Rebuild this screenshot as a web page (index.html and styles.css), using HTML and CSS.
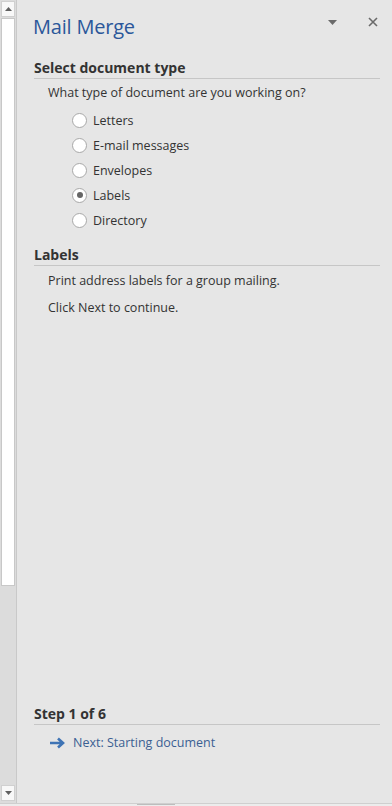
FILE: index.html
```html
<!DOCTYPE html>
<html>
<head>
<meta charset="utf-8">
<link rel="stylesheet" href="styles.css">
</head>
<body>
<div class="app">
  <div class="scrollbar">
    <div class="sb-btn"><svg width="7" height="4" viewBox="0 0 7 4"><path d="M0 4 L3.5 0 L7 4 Z" fill="#606060"/></svg></div>
    <div class="sb-thumb"></div>
    <div class="sb-track"></div>
    <div class="sb-btn"><svg width="7" height="4" viewBox="0 0 7 4"><path d="M0 0 L3.5 4 L7 0 Z" fill="#606060"/></svg></div>
  </div>
  <div class="panel">
    <div class="header">
      <h1 class="title">Mail Merge</h1>
      <div class="controls">
        <svg class="ctl-drop" width="9" height="5" viewBox="0 0 9 5"><path d="M0 0 H9 L4.5 5 Z" fill="#6a6a6a"/></svg>
        <svg class="ctl-close" width="10" height="10" viewBox="0 0 10 10"><path d="M1 1 L9 9 M9 1 L1 9" stroke="#6a6a6a" stroke-width="1.6"/></svg>
      </div>
    </div>
    <section class="section">
      <h2 class="heading">Select document type</h2>
      <p class="text q">What type of document are you working on?</p>
      <ul class="radios">
        <li class="radio"><span class="dot"></span>Letters</li>
        <li class="radio"><span class="dot"></span>E-mail messages</li>
        <li class="radio"><span class="dot"></span>Envelopes</li>
        <li class="radio"><span class="dot on"></span>Labels</li>
        <li class="radio"><span class="dot"></span>Directory</li>
      </ul>
    </section>
    <section class="section">
      <h2 class="heading">Labels</h2>
      <p class="text">Print address labels for a group mailing.</p>
      <p class="text t2">Click Next to continue.</p>
    </section>
    <div class="spacer"></div>
    <section class="section footer">
      <h2 class="heading">Step 1 of 6</h2>
      <a class="next"><svg width="17" height="12" viewBox="0 0 17 12"><path d="M1 6 H13 M9 1.5 L14 6 L9 10.5" stroke="#3f74b5" stroke-width="2.6" fill="none"/></svg>Next: Starting document</a>
    </section>
  </div>
</div>
<div class="bottom"><div class="bottom-thumb"></div></div>
</body>
</html>
```

FILE: styles.css
```css
html, body {
  margin: 0;
  padding: 0;
  width: 392px;
  height: 806px;
  overflow: hidden;
  background: #e6e6e6;
  font-family: "Open Sans", "Noto Sans", sans-serif;
}
.app {
  display: flex;
  height: 803px;
}
.scrollbar {
  width: 17px;
  border-right: 1px solid #c9c9c9;
  background: #dcdcdc;
  display: flex;
  flex-direction: column;
  padding: 1px 1px 2px 1px;
  box-sizing: border-box;
  gap: 1px;
}
.sb-btn {
  height: 14px;
  background: #f8f8f8;
  border: 1px solid #d0d0d0;
  display: flex;
  align-items: center;
  justify-content: center;
}
.sb-thumb {
  height: 566px;
  background: #ffffff;
  border: 1px solid #c8c8c8;
}
.sb-track {
  flex: 1;
}
.panel {
  flex: 1;
  display: flex;
  flex-direction: column;
  padding: 0 12px 0 17px;
}
.header {
  display: flex;
  align-items: flex-start;
  justify-content: space-between;
  height: 58px;
}
.title {
  margin: 0;
  margin-top: 13px;
  margin-left: -1px;
  font-weight: normal;
  font-size: 20px;
  line-height: 28px;
  color: #2b579a;
  letter-spacing: -0.2px;
}
.controls {
  display: flex;
  align-items: center;
  gap: 31px;
  margin-top: 17px;
  height: 10px;
  padding-right: 2px;
}
.ctl-drop { margin-top: 1px; }
.section {
  display: flex;
  flex-direction: column;
}
.heading {
  margin: 0;
  font-size: 14px;
  font-weight: bold;
  color: #333333;
  line-height: 19px;
  padding-bottom: 1px;
  border-bottom: 1px solid #c6c6c6;
}
.text {
  margin: 0;
  padding-left: 14px;
  font-size: 12.5px;
  color: #333333;
  line-height: 18px;
  margin-top: 6px;
}
.text.q { margin-top: 5px; }
.t2 { margin-top: 9px; }
.radios {
  list-style: none;
  margin: 9px 0 0 0;
  padding: 0 0 0 38px;
  display: flex;
  flex-direction: column;
  gap: 7px;
}
.radio {
  display: flex;
  align-items: center;
  gap: 6px;
  font-size: 12.5px;
  color: #333333;
  height: 18px;
}
.dot {
  width: 13px;
  height: 13px;
  border-radius: 50%;
  border: 1px solid #a8a8a8;
  background: #ffffff;
  display: flex;
  align-items: center;
  justify-content: center;
}
.dot.on::after {
  content: "";
  width: 6px;
  height: 6px;
  border-radius: 50%;
  background: #666666;
}
.section + .section { margin-top: 16px; }
.spacer { flex: 1; }
.footer { margin-bottom: 51px; }
.next {
  display: flex;
  align-items: center;
  gap: 7px;
  margin-top: 9px;
  padding-left: 15px;
  font-size: 12.5px;
  color: #3b5f93;
  line-height: 18px;
}
.bottom {
  height: 3px;
  border-top: 1px solid #cfcfcf;
  background: #ececec;
  position: relative;
}
.bottom-thumb {
  position: absolute;
  left: 137px;
  width: 38px;
  top: 0;
  height: 1px;
  background: #bdbdbd;
}
```
